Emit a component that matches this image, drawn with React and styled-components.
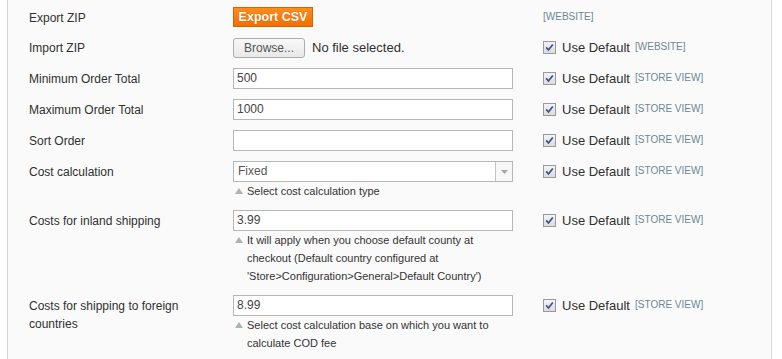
import styled, { createGlobalStyle } from 'styled-components'

const GlobalStyle = createGlobalStyle`
  html, body { margin: 0; padding: 0; background: #ffffff; }
  body { font-family: 'Liberation Sans', Arial, sans-serif; color: #303030; }
`

const rows = [
    { label: 'Export ZIP', kind: 'export', scope: '[WEBSITE]', noDefault: true },
    { label: 'Import ZIP', kind: 'file', scope: '[WEBSITE]' },
    { label: 'Minimum Order Total', kind: 'text', value: '500', scope: '[STORE VIEW]' },
    { label: 'Maximum Order Total', kind: 'text', value: '1000', scope: '[STORE VIEW]' },
    { label: 'Sort Order', kind: 'text', value: '', scope: '[STORE VIEW]' },
    { label: 'Cost calculation', kind: 'select', value: 'Fixed', scope: '[STORE VIEW]', hint: 'Select cost calculation type' },
    {
        label: 'Costs for inland shipping', kind: 'text', value: '3.99', scope: '[STORE VIEW]',
        hint: "It will apply when you choose default county at checkout (Default country configured at 'Store>Configuration>General>Default Country')"
    },
    {
        label: 'Costs for shipping to foreign countries', kind: 'text', value: '8.99', scope: '[STORE VIEW]',
        hint: 'Select cost calculation base on which you want to calculate COD fee'
    },
]

function Check() {
    return (
        <CheckBox>
            <svg width="9" height="9" viewBox="0 0 9 9">
                <path d="M1.2 4.4 L3.5 7 L7.8 1.4" stroke="#3d4f9a" strokeWidth="1.7" fill="none" />
            </svg>
        </CheckBox>
    )
}

function Field({ row }) {
    if (row.kind === 'export') return <ExportButton>Export CSV</ExportButton>
    if (row.kind === 'file') {
        return (
            <FileLine>
                <BrowseButton>Browse...</BrowseButton>
                <span>No file selected.</span>
            </FileLine>
        )
    }
    if (row.kind === 'select') {
        return (
            <SelectBox>
                <span>{row.value}</span>
                <SelectArrow>
                    <svg width="7" height="4" viewBox="0 0 7 4"><path d="M0 0 H7 L3.5 4 Z" fill="#a6a6a6" /></svg>
                </SelectArrow>
            </SelectBox>
        )
    }
    return <TextInput>{row.value}</TextInput>
}

export default function App() {
    return (
        <>
            <GlobalStyle />
            <Panel>
                {rows.map(row => (
                    <Row key={row.label}>
                        <Label>{row.label}</Label>
                        <Value>
                            <Field row={row} />
                            {row.hint && <Hint>{row.hint}</Hint>}
                        </Value>
                        {row.noDefault ? (
                            <Scope first>{row.scope}</Scope>
                        ) : (
                            <>
                                <UseDefault>
                                    <Check />
                                    <span>Use Default</span>
                                </UseDefault>
                                <Scope>{row.scope}</Scope>
                            </>
                        )}
                    </Row>
                ))}
            </Panel>
        </>
    )
}

const Panel = styled.div`
    margin-left: 7px;
    width: 765px;
    height: 359px;
    box-sizing: border-box;
    padding-top: 2px;
    background-color: #fafafa;
    border-left: 1px solid #d6d6d6;
    border-right: 1px solid #d6d6d6;
    overflow: hidden;
`

const Row = styled.div`
    display: grid;
    grid-template-columns: 204px 280px 30px 92px auto;
    padding: 5px 0 5px 21px;
    align-items: start;
`

const Label = styled.div`
    grid-column: 1;
    font-size: 12px;
    line-height: 18px;
    padding-top: 2px;
    color: #303030;
    width: 170px;
`

const Value = styled.div`
    grid-column: 2;
    display: flex;
    flex-direction: column;
`

const TextInput = styled.div`
    height: 21px;
    box-sizing: border-box;
    border: 1px solid #b6b6b6;
    background: #ffffff;
    font-size: 12px;
    line-height: 19px;
    padding-left: 3px;
    color: #444;
`

const SelectBox = styled(TextInput)`
    display: flex;
    justify-content: space-between;
    padding-left: 4px;
    color: #555;
`

const SelectArrow = styled.div`
    width: 16px;
    border-left: 1px solid #c4c4c4;
    display: flex;
    align-items: center;
    justify-content: center;
    background: #f7f7f7;
`

const ExportButton = styled.div`
    width: 80px;
    height: 20px;
    box-sizing: border-box;
    border: 1px solid #d76200;
    background: linear-gradient(#ff8c20, #f26f00);
    color: #ffffff;
    font-weight: bold;
    font-size: 12.5px;
    line-height: 18px;
    text-align: center;
    text-shadow: 0 0 1px #c25800;
`

const FileLine = styled.div`
    display: flex;
    align-items: center;
    gap: 7px;
    font-size: 13px;
    color: #303030;
    height: 21px;
`

const BrowseButton = styled.div`
    width: 72px;
    height: 20px;
    box-sizing: border-box;
    border: 1px solid #adadad;
    border-radius: 3px;
    background: linear-gradient(#f8f8f8, #e8e8e8);
    color: #555;
    font-size: 12px;
    line-height: 18px;
    text-align: center;
`

const Hint = styled.div`
    position: relative;
    font-size: 11px;
    line-height: 18px;
    padding-left: 14px;
    width: 262px;
    color: #333;

    &::before {
        content: '';
        position: absolute;
        left: 2px;
        top: 6px;
        border-left: 4px solid transparent;
        border-right: 4px solid transparent;
        border-bottom: 6px solid #a9b3b8;
    }
`

const UseDefault = styled.div`
    grid-column: 4;
    display: flex;
    align-items: center;
    gap: 6px;
    height: 21px;
    font-size: 13px;
    color: #303030;
`

const CheckBox = styled.span`
    width: 13px;
    height: 13px;
    box-sizing: border-box;
    border: 1px solid #9a9a9a;
    background: linear-gradient(#f4f4f4, #dcdcdc);
    display: flex;
    align-items: center;
    justify-content: center;
`

const Scope = styled.div`
    grid-column: ${p => (p.first ? '4 / 6' : '5')};
    font-size: 10px;
    color: #6d8796;
    line-height: 18px;
    margin-top: 1px;
    white-space: nowrap;
`
